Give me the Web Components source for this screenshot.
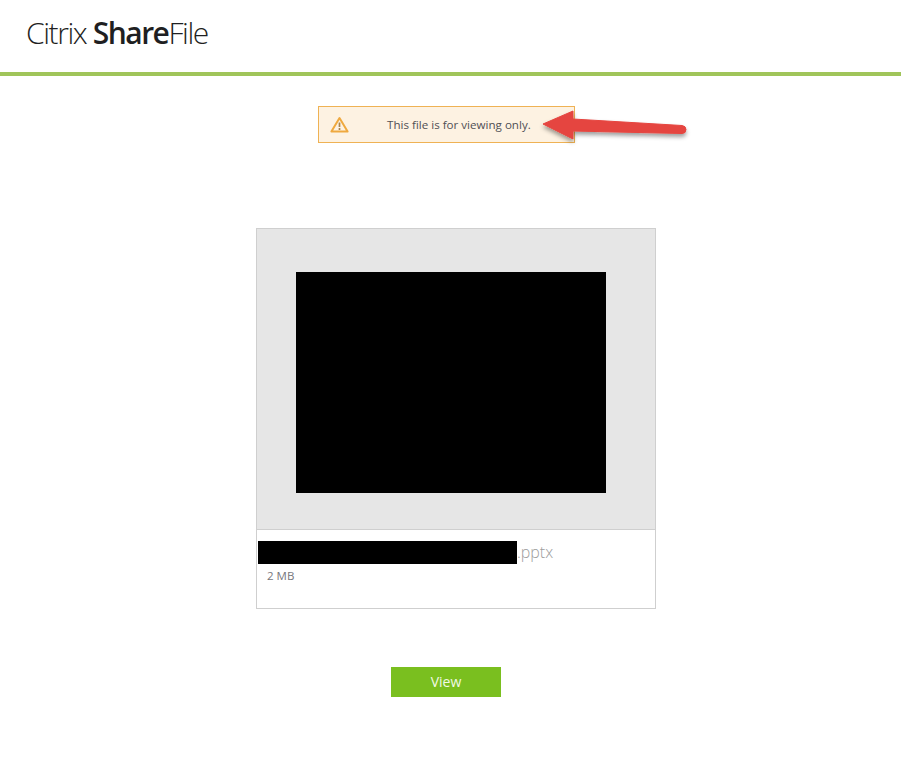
<!DOCTYPE html>
<html><head><meta charset="utf-8">
<style>
html,body{margin:0;padding:0;background:#fff;font-family:"Open Sans","Noto Sans",sans-serif}
</style></head>
<body>
<sf-page>
  <sf-header></sf-header>
  <sf-alert>This file is for viewing only.</sf-alert>
  <sf-card name=".pptx" size="2 MB"></sf-card>
  <sf-button>View</sf-button>
</sf-page>
<script>
function def(name, html, init){
  customElements.define(name, class extends HTMLElement{
    constructor(){super();this.attachShadow({mode:"open"}).innerHTML=html;}
    connectedCallback(){if(init)init(this);}
  });
}
def("sf-page",`<style>:host{display:flex;flex-direction:column;align-items:flex-start;position:relative;width:901px;height:779px;overflow:hidden}</style><slot></slot>`);
def("sf-header",`<style>
:host{display:flex;align-items:center;box-sizing:border-box;width:901px;height:76px;border-bottom:4px solid #a0c55a;padding:0 0 6px 26px;color:#1f1f22}
.logo{font-size:30px;font-weight:300;letter-spacing:-1.42px;line-height:1;white-space:nowrap}
b{font-weight:600;letter-spacing:-1.5px}
</style><div class="logo">Citrix <b>Share</b>File</div>`);
def("sf-alert",`<style>
:host{display:flex;align-items:center;box-sizing:border-box;width:257px;height:37px;margin:30px 0 0 318px;background:#fdf2e2;border:1px solid #efb254;color:#505055;font-size:11.6px;position:relative}
.ic{display:flex;margin-left:11px;flex:none}
.t{margin-left:38px;white-space:nowrap}
.arrow{position:absolute;left:215px;top:-8px;overflow:visible}
</style>
<span class="ic"><svg width="19" height="17" viewBox="0 0 19 17"><path d="M9.5 2 L17.6 15.6 H1.4 Z" fill="none" stroke="#efa93f" stroke-width="2" stroke-linejoin="round"/><path d="M9.5 6.5V11" stroke="#a8854f" stroke-width="1.7"/><path d="M9.5 12V14" stroke="#a8854f" stroke-width="1.7"/></svg></span>
<span class="t"><slot></slot></span>
<svg class="arrow" width="160" height="50" viewBox="0 0 160 50"><defs><filter id="s" x="-20%" y="-40%" width="140%" height="190%"><feDropShadow dx="0" dy="3" stdDeviation="2" flood-color="#000" flood-opacity=".38"/></filter></defs>
<path filter="url(#s)" d="M9 25 L39 12 L39 20 L148 26.500 Q152 27 152 30.500 Q152 34.500 148 34.500 L39 32 L39 40 Z" fill="#e5453f" stroke="#e5453f" stroke-width="1" stroke-linejoin="round"/></svg>`);
def("sf-card",`<style>
:host{display:block;box-sizing:border-box;width:400px;height:381px;margin:85px 0 0 256px;border:1px solid #cfcfcf;background:#fff}
.prev{display:flex;align-items:flex-start;box-sizing:border-box;height:301px;background:#e6e6e6;border-bottom:1px solid #cfcfcf;padding:43px 0 0 39px}
.thumb{width:310px;height:221px;background:#000}
.info{padding:11px 0 0 1px}
.name{display:flex;align-items:center;height:23px;color:#9c9c9c;font-size:16px;font-weight:300;line-height:23px}
.red{width:259px;height:23px;background:#000}
.size{margin:4px 0 0 9px;font-size:11.5px;color:#77777c;line-height:15px}
</style>
<div class="prev"><div class="thumb"></div></div>
<div class="info"><div class="name"><span class="red"></span><span id="n"></span></div><div class="size" id="s"></div></div>`,
(e)=>{e.shadowRoot.getElementById("n").textContent=e.getAttribute("name");e.shadowRoot.getElementById("s").textContent=e.getAttribute("size");});
def("sf-button",`<style>
:host{display:flex;align-items:center;justify-content:center;box-sizing:border-box;width:110px;height:30px;margin:58px 0 0 391px;padding-bottom:2px;background:#7abf1f;color:#f2f9e6;font-size:14px}
</style><slot></slot>`);
</script>
</body></html>
